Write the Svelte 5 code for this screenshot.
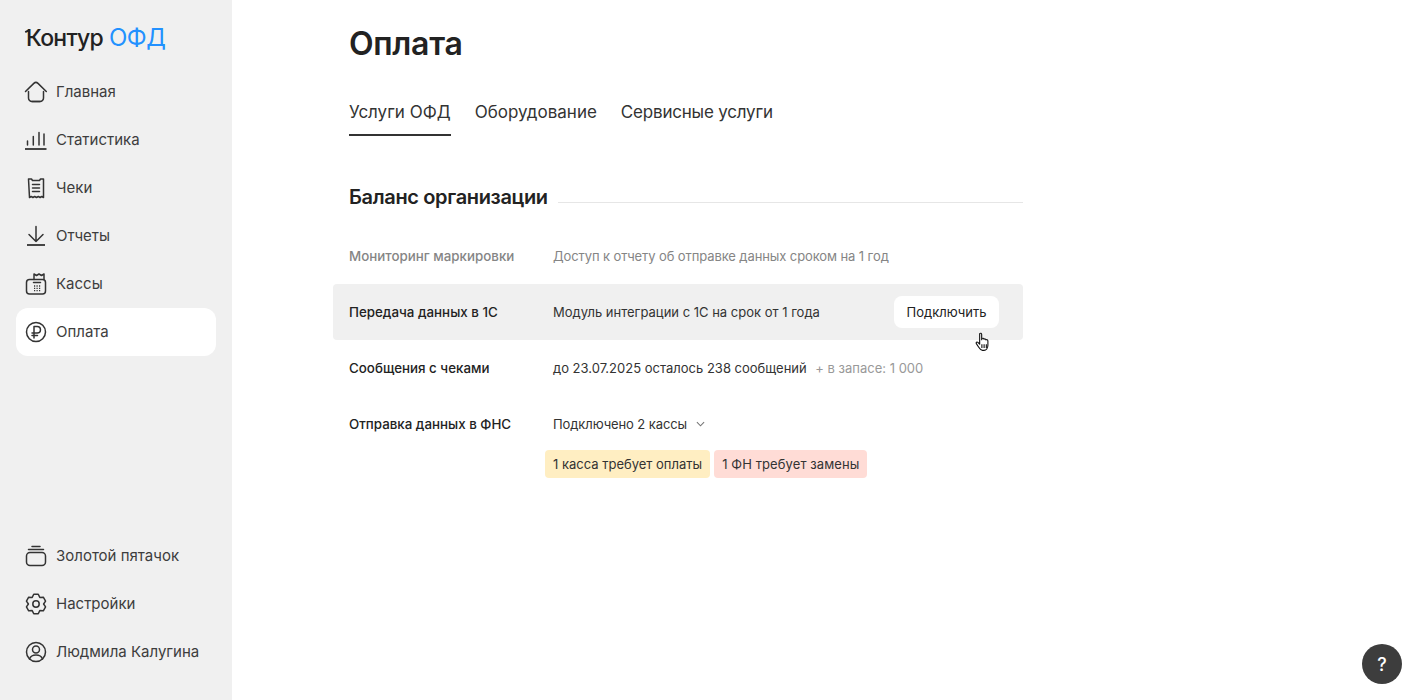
<script>
  const topNav = [
    { id: 'home', label: 'Главная' },
    { id: 'stats', label: 'Статистика' },
    { id: 'receipts', label: 'Чеки' },
    { id: 'reports', label: 'Отчеты' },
    { id: 'kkt', label: 'Кассы' },
    { id: 'pay', label: 'Оплата', active: true }
  ];
  const bottomNav = [
    { id: 'coins', label: 'Золотой пятачок' },
    { id: 'settings', label: 'Настройки' },
    { id: 'user', label: 'Людмила Калугина' }
  ];
  const tabs = ['Услуги ОФД', 'Оборудование', 'Сервисные услуги'];
</script>

{#snippet icon(id)}
  <svg class="ico" viewBox="0 0 24 24" width="24" height="24" fill="none" stroke="currentColor" stroke-width="1.5" stroke-linecap="round" stroke-linejoin="round">
    {#if id === 'home'}
      <path d="M1.500 11.500 9.800 3.400a3 3 0 0 1 4.200 0l8.300 8.100" />
      <path d="M4.500 11.500v6.500a3.500 3.500 0 0 0 3.500 3.500h8a3.500 3.500 0 0 0 3.500-3.500v-6.500" />
      <path d="M8 21.500h8" />
    {:else if id === 'stats'}
      <path d="M1 21h21.500" stroke-width="1.800" stroke-linecap="butt" />
      <path d="M3.500 13v4M9.300 8.500V17M15 4.500V17M20 6v11" />
    {:else if id === 'receipts'}
      <path d="M4.500 3h3l1 1.500h7l1-1.500h3v18.500l-1.700-1-1.700 1-1.800-1-1.800 1-1.800-1-1.800 1-1.700-1-1.700 1z" />
      <path d="M8.500 8.500h7M8.500 12h7M8.500 15.500h7" />
    {:else if id === 'reports'}
      <path d="M12 2.500v15M5 10.500l7 7 7-7" />
      <path d="M3 21h18" stroke-width="1.800" stroke-linecap="butt" />
    {:else if id === 'kkt'}
      <rect x="2.500" y="7.500" width="19" height="14.500" rx="3" />
      <path d="M10 7.500V2l2.500 1.500L15 2l2.500 1.500L20 2v5.500" />
      <path d="M9.500 10.500h7" />
      <path d="M10 14h1.200M12.500 14h1.200M15 14h1.200M10 16.300h1.200M12.500 16.300h1.200M15 16.300h1.200M10 18.600h1.200M12.500 18.600h1.200M15 18.600h1.200" stroke-width="1.300" stroke-linecap="butt" />
    {:else if id === 'pay'}
      <circle cx="12" cy="12" r="9.500" />
      <path d="M10 18V6.500h3.200a3.200 3.200 0 0 1 0 6.500H8M8 15.500h5.500" />
    {:else if id === 'coins'}
      <rect x="2.500" y="8.500" width="19" height="13" rx="3.500" />
      <path d="M4.500 5.500h15M8 2.500h8" />
    {:else if id === 'settings'}
      <path d="M9.750 2.260h4.500L15.800 5.420 19.310 5.180l2.250 3.900L19.600 12l1.960 2.920-2.250 3.900-3.510-.24-1.550 3.160h-4.500L8.200 18.580l-3.510.24-2.250-3.900L4.400 12 2.440 9.080l2.250-3.900 3.510.24z" />
      <circle cx="12" cy="12" r="3.200" />
    {:else if id === 'user'}
      <circle cx="12" cy="12" r="9.500" />
      <circle cx="12" cy="9.500" r="3.500" />
      <path d="M5.500 19c1-3 3.500-4 6.500-4s5.500 1 6.500 4" />
    {/if}
  </svg>
{/snippet}

<div class="page">
  <aside class="side">
    <div class="logo"><span class="logo-k">Контур</span> <span class="logo-o">ОФД</span></div>
    <nav class="nav">
      {#each topNav as item}
        <div class="nav-item" class:active={item.active}>
          {@render icon(item.id)}
          <span>{item.label}</span>
        </div>
      {/each}
    </nav>
    <nav class="nav bottom">
      {#each bottomNav as item}
        <div class="nav-item">
          {@render icon(item.id)}
          <span>{item.label}</span>
        </div>
      {/each}
    </nav>
  </aside>

  <main class="main">
    <h1>Оплата</h1>
    <div class="tabs">
      {#each tabs as tab, i}
        <div class="tab" class:on={i === 0}>{tab}</div>
      {/each}
    </div>

    <section class="balance">
      <div class="heading">
        <h2>Баланс организации</h2>
        <div class="rule"></div>
      </div>

      <div class="row muted">
        <div class="name">Мониторинг маркировки</div>
        <div class="val">Доступ к отчету об отправке данных сроком на 1 год</div>
      </div>
      <div class="row hover">
        <div class="name">Передача данных в 1С</div>
        <div class="val">Модуль интеграции с 1С на срок от 1 года</div>
        <button class="btn">Подключить</button>
        <svg class="cursor" viewBox="0 0 14 18" width="16" height="20">
          <path d="M4 1.500c.8-.8 1.800-.3 1.800.7V7l.2-1c.8-.7 1.700-.3 1.800.5 .7-.6 1.700-.3 1.800.6 .8-.5 1.800-.1 1.800 1V12c0 2.500-1.500 4.500-3.500 4.500H6.500C5 16.500 4 15 3 13.500L1 10.500c-.6-1 .5-1.900 1.400-1.200L4 11V2z" fill="#fff" stroke="#111" stroke-width="1" stroke-linejoin="round" />
          <path d="M6 11v3.500M8 11v3.500M10 11v3.500" stroke="#111" stroke-width="1" />
        </svg>
      </div>
      <div class="row">
        <div class="name">Сообщения с чеками</div>
        <div class="val">до 23.07.2025 осталось 238 сообщений <span class="extra">+ в запасе: 1 000</span></div>
      </div>
      <div class="row last">
        <div class="name">Отправка данных в ФНС</div>
        <div class="val tight">Подключено 2 кассы
          <svg class="chev" viewBox="0 0 10 6" width="9" height="6" fill="none" stroke="#757575" stroke-width="1.200"><path d="M1 1l4 4 4-4" /></svg>
        </div>
      </div>
      <div class="tags">
        <span class="tag warn">1 касса требует оплаты</span>
        <span class="tag err">1 ФН требует замены</span>
      </div>
    </section>
  </main>

  <button class="help">?</button>
</div>

<style>
  :global(body) {
    margin: 0;
    background: #fff;
  }
  .page {
    display: flex;
    height: 700px;
    overflow: hidden;
    font-family: Inter, "Noto Sans", sans-serif;
    color: #222;
  }
  .side {
    width: 232px;
    flex: none;
    background: #f0f0f0;
    display: flex;
    flex-direction: column;
    padding: 0 16px 24px;
    box-sizing: border-box;
  }
  .logo {
    height: 68px;
    display: flex;
    align-items: center;
    gap: 6px;
    padding-left: 10px;
    padding-top: 8px;
    box-sizing: border-box;
    font-size: 23px;
    letter-spacing: -0.75px;
    font-weight: 500;
    line-height: 1;
  }
  .logo-k {
    position: relative;
    color: #222;
  }
  .logo-k::before {
    content: "";
    position: absolute;
    left: -1px;
    top: 3px;
    width: 5px;
    height: 2px;
    background: #222;
    transform: rotate(-25deg);
  }
  .logo-o {
    color: #2291ff;
    font-weight: 400;
    font-size: 24px;
    letter-spacing: -0.5px;
  }
  .nav {
    display: flex;
    flex-direction: column;
  }
  .bottom {
    margin-top: auto;
  }
  .nav-item {
    height: 48px;
    display: flex;
    align-items: center;
    gap: 8px;
    padding-left: 8px;
    border-radius: 12px;
    font-size: 15px;
    color: #3d3d3d;
  }
  .nav-item span {
    margin-top: -2px;
  }
  .nav-item.active {
    background: #fff;
  }
  .ico {
    flex: none;
    color: #333;
  }
  .main {
    padding-left: 117px;
    width: 674px;
    flex: none;
  }
  h1 {
    margin: 0;
    padding-top: 24px;
    font-size: 32px;
    line-height: 40px;
    font-weight: 600;
    letter-spacing: -0.3px;
    color: #222;
  }
  .tabs {
    display: flex;
    gap: 24px;
    margin-top: 24px;
  }
  .tab {
    height: 48px;
    line-height: 48px;
    font-size: 17px;
    color: #333;
    box-sizing: border-box;
  }
  .tab:last-child {
    letter-spacing: -0.2px;
  }
  .tab.on {
    border-bottom: 2px solid #333;
  }
  .balance {
    margin-top: 47px;
  }
  .heading {
    display: flex;
    align-items: center;
    gap: 10px;
    height: 28px;
  }
  h2 {
    margin: 0;
    font-size: 20px;
    line-height: 28px;
    font-weight: 600;
    color: #222;
    letter-spacing: -0.35px;
  }
  .rule {
    flex: 1;
    height: 1px;
    background: #e6e6e6;
    margin-top: 10px;
  }
  .row {
    position: relative;
    display: flex;
    align-items: center;
    height: 56px;
    font-size: 13px;
    margin-left: -16px;
    padding: 0 24px 0 16px;
    border-radius: 4px;
  }
  .heading + .row {
    margin-top: 17px;
  }
  .name {
    width: 204px;
    flex: none;
    font-weight: 500;
    font-size: 13.350px;
    color: #222;
  }
  .val {
    color: #333;
    white-space: nowrap;
  }
  .val.tight {
    letter-spacing: -0.1px;
  }
  .muted .name, .muted .val {
    color: #858585;
  }
  .muted .val {
    letter-spacing: -0.1px;
  }
  .extra {
    color: #999;
    margin-left: 5px;
  }
  .hover {
    background: #f0f0f0;
  }
  .btn {
    margin-left: auto;
    height: 32px;
    width: 105px;
    padding: 0;
    border: 0;
    border-radius: 8px;
    background: #fff;
    color: #222;
    font: inherit;
  }
  .cursor {
    position: absolute;
    left: 642px;
    top: 48px;
  }
  .chev {
    margin-left: 5px;
    vertical-align: 2px;
  }
  .tags {
    display: flex;
    gap: 4px;
    margin-top: -2px;
    margin-left: 196px;
  }
  .tag {
    height: 28px;
    line-height: 28px;
    padding: 0 8px;
    font-size: 13px;
    border-radius: 4px;
    color: #333;
  }
  .warn { background: #ffeec2; }
  .err {
    background: #ffdcd6;
    letter-spacing: 0.1px;
  }
  .help {
    position: fixed;
    right: 16px;
    bottom: 16px;
    width: 40px;
    height: 40px;
    border: 0;
    border-radius: 50%;
    background: #3d3d3d;
    color: #fff;
    font: 500 18px Inter, sans-serif;
  }
</style>
